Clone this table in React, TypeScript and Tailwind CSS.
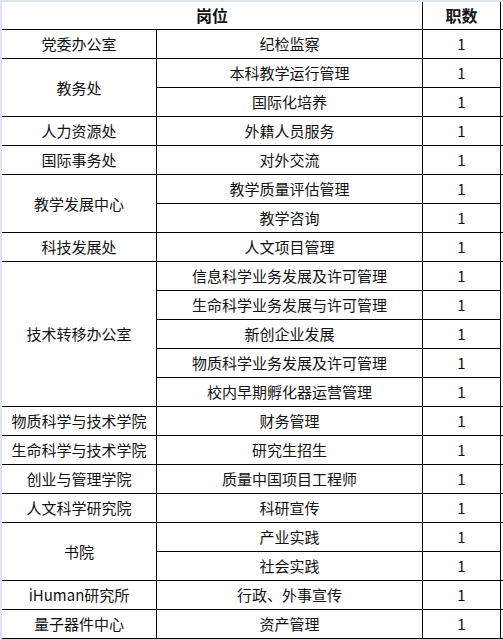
import React from "react";

type Group = { dept: string; posts: string[] };

const groups: Group[] = [
  { dept: "党委办公室", posts: ["纪检监察"] },
  { dept: "教务处", posts: ["本科教学运行管理", "国际化培养"] },
  { dept: "人力资源处", posts: ["外籍人员服务"] },
  { dept: "国际事务处", posts: ["对外交流"] },
  { dept: "教学发展中心", posts: ["教学质量评估管理", "教学咨询"] },
  { dept: "科技发展处", posts: ["人文项目管理"] },
  {
    dept: "技术转移办公室",
    posts: [
      "信息科学业务发展及许可管理",
      "生命科学业务发展与许可管理",
      "新创企业发展",
      "物质科学业务发展及许可管理",
      "校内早期孵化器运营管理",
    ],
  },
  { dept: "物质科学与技术学院", posts: ["财务管理"] },
  { dept: "生命科学与技术学院", posts: ["研究生招生"] },
  { dept: "创业与管理学院", posts: ["质量中国项目工程师"] },
  { dept: "人文科学研究院", posts: ["科研宣传"] },
  { dept: "书院", posts: ["产业实践", "社会实践"] },
  { dept: "iHuman研究所", posts: ["行政、外事宣传"] },
  { dept: "量子器件中心", posts: ["资产管理"] },
];

export default function App() {
  return (
    <div className="w-[503px] h-[639px] bg-white overflow-hidden border-t-2 border-l-2 border-[#dde4eb]">
      <div className="flex flex-col text-[15px] leading-none text-[#111] font-['Noto_Sans_CJK_SC','Noto_Sans',sans-serif]">
        <div className="flex h-[28px] border-b border-black text-[16px] font-bold">
          <div className="w-[421px] flex items-center justify-center border-r border-black pb-px">岗位</div>
          <div className="w-[78px] flex items-center justify-center border-r border-black pb-px">职数</div>
        </div>
        {groups.map((g) => (
          <div key={g.dept} className="flex border-b border-black">
            <div className="w-[155px] flex items-center justify-center border-r border-black pb-px">
              {g.dept}
            </div>
            <div className="flex flex-col">
              {g.posts.map((p, i) => (
                <div
                  key={p}
                  className={
                    i < g.posts.length - 1
                      ? "flex h-[29px] border-b border-black"
                      : "flex h-[28px]"
                  }
                >
                  <div className="w-[266px] flex items-center justify-center border-r border-black pb-px">
                    {p}
                  </div>
                  <div className="w-[78px] flex items-center justify-center border-r border-black pb-px">
                    1
                  </div>
                </div>
              ))}
            </div>
          </div>
        ))}
      </div>
    </div>
  );
}
